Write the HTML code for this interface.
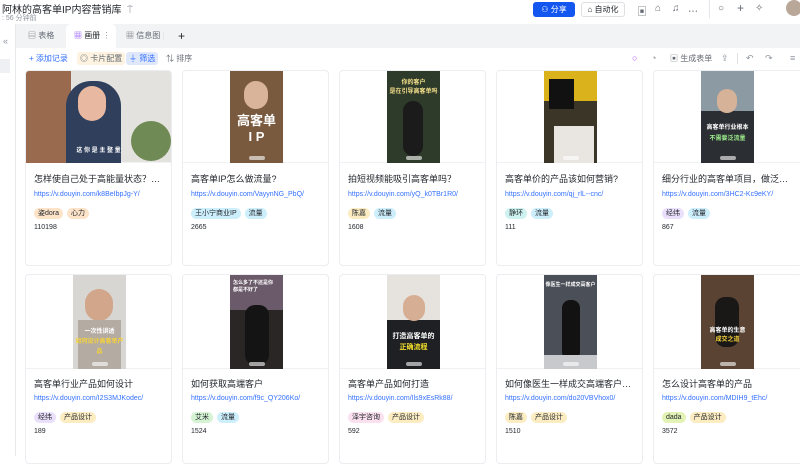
<!DOCTYPE html>
<html><head><meta charset="utf-8">
<style>
*{margin:0;padding:0;box-sizing:border-box}
body{width:800px;height:456px;overflow:hidden;background:#fff;font-family:"Liberation Sans","Noto Sans CJK SC",sans-serif;color:#1f2329;position:relative}
.a{position:absolute}
.title{left:2px;top:1px;font-size:10px;color:#1f2329}
.sub{left:2px;top:13px;font-size:7px;color:#8f959e}
.tabs{left:16px;top:24px;width:784px;height:24px;background:#f2f3f5}
.tab{position:absolute;top:0;height:24px;line-height:24px;font-size:8px;color:#646a73}
.tab.on{background:#fff;border-radius:5px 5px 0 0;color:#1f2329}
.side{left:0;top:24px;width:16px;height:432px;border-right:1px solid #e8e9eb}
.tb{top:52px;font-size:8px;color:#646a73;height:13px;line-height:13px;padding:0 3px;border-radius:3px}
.ic{top:3px;font-size:10px;color:#646a73}
.ti{top:52px;font-size:9px;color:#8f959e;line-height:13px}
.card{position:absolute;width:147px;background:#fff;border:1px solid #ebedf0;border-radius:4px;overflow:hidden}
.img{position:absolute;top:0;height:92px;left:0;right:0;border-bottom:1px solid #f0f1f3}
.th{position:absolute;top:0;left:47px;width:53px;height:92px}
.ct{position:absolute;left:8px;font-size:9px;color:#1f2329;white-space:nowrap;width:133px;overflow:hidden;text-overflow:ellipsis}
.lk{position:absolute;left:8px;font-size:7px;color:#3370ff;white-space:nowrap}
.tg{position:absolute;left:8px;font-size:7px;white-space:nowrap}
.tg span{display:inline-block;padding:0 4px;height:11px;line-height:11px;border-radius:6px;margin-right:4px;color:#1f2329}
.nm{position:absolute;left:8px;font-size:7px;color:#1f2329}
.o{background:#fde3c8}.b{background:#cdeefb}.p{background:#ebe0fb}.g{background:#d5f2d3}.y{background:#fbecc1}.pk{background:#fbe0ef}.c{background:#cdf2ef}.l{background:#e3f2b5}
.cap{position:absolute;left:0;right:0;text-align:center;font-weight:bold;color:#fff;font-size:8px}
.dots{position:absolute;bottom:3px;left:50%;margin-left:-8px;width:16px;height:4px;border-radius:2px;background:rgba(255,255,255,.6)}
</style></head><body>
<div class="a title">阿林的高客单IP内容营销库 &nbsp;<span style="color:#8f959e">⍑</span></div>
<div class="a sub">: 56 分钟前</div>
<div class="a" style="left:533px;top:2px;width:42px;height:15px;background:#1456f0;border-radius:3px;color:#fff;font-size:8px;line-height:15px;text-align:center">⚇ 分享</div>
<div class="a" style="left:581px;top:2px;width:44px;height:15px;border:1px solid #dee0e3;border-radius:3px;font-size:8px;line-height:13px;text-align:center">⌂ 自动化</div>
<div class="a ic" style="left:637px">▣</div>
<div class="a ic" style="left:655px">⌂</div>
<div class="a ic" style="left:672px">♫</div>
<div class="a ic" style="left:688px">⋯</div>
<div class="a" style="left:709px;top:0;width:1px;height:18px;background:#e5e6eb"></div>
<div class="a ic" style="left:718px">○</div>
<div class="a ic" style="left:737px;font-size:12px;top:1px">+</div>
<div class="a ic" style="left:755px">✧</div>
<div class="a" style="left:786px;top:0;width:16px;height:16px;border-radius:8px;background:#b9a89a"></div>
<div class="a side"><div style="position:absolute;top:12px;left:3px;font-size:9px;color:#8f959e">«</div><div style="position:absolute;top:35px;left:0;width:10px;height:14px;background:#eef0f3"></div></div>
<div class="a tabs">
 <div class="tab" style="left:0;width:50px;padding-left:12px">▤ 表格</div>
 <div class="tab on" style="left:50px;width:50px;padding-left:8px"><span style="color:#7f3bf5">▦</span> 画册 <span style="color:#8f959e">⋮</span></div>
 <div class="tab" style="left:110px;width:60px;padding-left:0">▦ 信息图 <span style="color:#dee0e3">|</span></div>
 <div class="tab" style="left:162px;font-size:12px;color:#1f2329">+</div>
</div>
<div class="a tb" style="left:26px;color:#3370ff">+ 添加记录</div>
<div class="a tb" style="left:77px;background:#fdf3e0">◎ 卡片配置</div>
<div class="a tb" style="left:126px;background:#dfe7fb;color:#3370ff">⏚ 筛选</div>
<div class="a tb" style="left:163px">⇅ 排序</div>
<div class="a ti" style="left:632px;color:#b04bf5">○</div>
<div class="a ti" style="left:651px">◔</div>
<div class="a ti" style="left:670px;font-size:8px;color:#646a73">▣ 生成表单</div>
<div class="a ti" style="left:721px">⇪</div>
<div class="a" style="left:737px;top:53px;width:1px;height:11px;background:#dee0e3"></div>
<div class="a ti" style="left:746px">↶</div>
<div class="a ti" style="left:765px">↷</div>
<div class="a ti" style="left:790px">≡</div>

<!-- row 1 -->
<div class="card" style="left:25px;top:70px;height:196px">
 <div class="img" style="background:#e4e2df"><div style="position:absolute;left:0;top:0;width:45px;height:92px;background:#9a6a4e"></div><div style="position:absolute;left:40px;top:10px;width:55px;height:82px;border-radius:25px 25px 0 0;background:#2f3f5c"></div><div style="position:absolute;left:52px;top:15px;width:28px;height:35px;border-radius:14px;background:#e8b9a0"></div><div style="position:absolute;right:0;top:50px;width:40px;height:40px;background:#6f8a55;border-radius:20px"></div><div class="cap" style="bottom:8px;font-size:6px">这 你 是 主 整 量</div></div>
 <div class="ct" style="top:101px">怎样使自己处于高能量状态？一些方法</div>
 <div class="lk" style="top:120px">https://v.douyin.com/k8BeIbpJg-Y/</div>
 <div class="tg" style="top:137px"><span class="o">姿dora</span><span class="o">心力</span></div>
 <div class="nm" style="top:153px">110198</div>
</div>
<div class="card" style="left:182px;top:70px;height:196px">
 <div class="img"><div class="th" style="background:#7a5a3e"><div style="position:absolute;left:14px;top:10px;width:24px;height:28px;border-radius:12px;background:#d9b49b"></div><div class="cap" style="top:42px;font-size:13px;line-height:16px">高客单<br>I P</div><div class="dots"></div></div></div>
 <div class="ct" style="top:101px">高客单IP怎么做流量?</div>
 <div class="lk" style="top:120px">https://v.douyin.com/VayynNG_PbQ/</div>
 <div class="tg" style="top:137px"><span class="b">王小宁商业IP</span><span class="b">流量</span></div>
 <div class="nm" style="top:153px">2665</div>
</div>
<div class="card" style="left:339px;top:70px;height:196px">
 <div class="img"><div class="th" style="background:#2e3a2a"><div class="cap" style="top:6px;font-size:6px;color:#f5e08a">你的客户<br>是在引导高客单吗</div><div style="position:absolute;left:16px;top:30px;width:20px;height:55px;border-radius:10px;background:#1b1b1b"></div><div class="dots"></div></div></div>
 <div class="ct" style="top:101px">拍短视频能吸引高客单吗？</div>
 <div class="lk" style="top:120px">https://v.douyin.com/yQ_k0TBr1R0/</div>
 <div class="tg" style="top:137px"><span class="y">陈嘉</span><span class="b">流量</span></div>
 <div class="nm" style="top:153px">1608</div>
</div>
<div class="card" style="left:496px;top:70px;height:196px">
 <div class="img"><div class="th" style="background:#3a3526"><div style="position:absolute;left:0;top:0;width:53px;height:30px;background:#d9b21c"></div><div style="position:absolute;left:5px;top:8px;width:25px;height:30px;background:#111"></div><div style="position:absolute;left:10px;top:55px;width:40px;height:37px;background:#e9e6e2"></div><div class="dots"></div></div></div>
 <div class="ct" style="top:101px">高客单价的产品该如何营销?</div>
 <div class="lk" style="top:120px">https://v.douyin.com/qj_rlL--cnc/</div>
 <div class="tg" style="top:137px"><span class="c">静环</span><span class="b">流量</span></div>
 <div class="nm" style="top:153px">111</div>
</div>
<div class="card" style="left:653px;top:70px;height:196px;width:150px">
 <div class="img"><div class="th" style="background:#8c9aa3"><div style="position:absolute;left:0;top:40px;width:53px;height:52px;background:#2b2e33"></div><div style="position:absolute;left:16px;top:18px;width:20px;height:24px;border-radius:10px;background:#d6b298"></div><div class="cap" style="top:52px;font-size:6px;line-height:11px">高客单行业根本<br><span style="color:#9ef08c">不需要泛流量</span></div><div class="dots"></div></div></div>
 <div class="ct" style="top:101px">细分行业的高客单项目，做泛流量有用吗</div>
 <div class="lk" style="top:120px">https://v.douyin.com/3HC2-Kc9eKY/</div>
 <div class="tg" style="top:137px"><span class="p">经纬</span><span class="b">流量</span></div>
 <div class="nm" style="top:153px">867</div>
</div>

<!-- row 2 -->
<div class="card" style="left:25px;top:274px;height:190px">
 <div class="img" style="height:94px"><div class="th" style="background:#d8d6d3;height:94px"><div style="position:absolute;left:12px;top:14px;width:28px;height:32px;border-radius:14px;background:#d2a68a"></div><div style="position:absolute;left:5px;top:45px;width:43px;height:49px;background:#b4aba3"></div><div class="cap" style="top:52px;font-size:6px;line-height:10px">一次性讲透<br><span style="color:#f5d23a">如何设计高客单产品</span></div><div class="dots"></div></div></div>
 <div class="ct" style="top:102px">高客单行业产品如何设计</div>
 <div class="lk" style="top:120px">https://v.douyin.com/I2S3MJKodec/</div>
 <div class="tg" style="top:137px"><span class="p">经纬</span><span class="y">产品设计</span></div>
 <div class="nm" style="top:153px">189</div>
</div>
<div class="card" style="left:182px;top:274px;height:190px">
 <div class="img" style="height:94px"><div class="th" style="background:#2a2626;height:94px"><div style="position:absolute;left:0;top:0;width:53px;height:35px;background:#6b5a6a"></div><div class="cap" style="top:4px;font-size:5px;text-align:left;padding-left:3px">怎么多了不还是你<br>都是不好了</div><div style="position:absolute;left:15px;top:30px;width:24px;height:60px;border-radius:10px;background:#151414"></div><div class="dots"></div></div></div>
 <div class="ct" style="top:102px">如何获取高端客户</div>
 <div class="lk" style="top:120px">https://v.douyin.com/f9c_QY206Ko/</div>
 <div class="tg" style="top:137px"><span class="g">艾米</span><span class="b">流量</span></div>
 <div class="nm" style="top:153px">1524</div>
</div>
<div class="card" style="left:339px;top:274px;height:190px">
 <div class="img" style="height:94px"><div class="th" style="background:#e6e3df;height:94px"><div style="position:absolute;left:0;top:45px;width:53px;height:49px;background:#1e2024"></div><div style="position:absolute;left:16px;top:20px;width:22px;height:26px;border-radius:11px;background:#d6ae93"></div><div class="cap" style="top:56px;font-size:7px;line-height:11px">打造高客单的<br><span style="color:#f5e12a">正确流程</span></div><div class="dots"></div></div></div>
 <div class="ct" style="top:102px">高客单产品如何打造</div>
 <div class="lk" style="top:120px">https://v.douyin.com/Ils9xEsRk88/</div>
 <div class="tg" style="top:137px"><span class="pk">泽宇咨询</span><span class="y">产品设计</span></div>
 <div class="nm" style="top:153px">592</div>
</div>
<div class="card" style="left:496px;top:274px;height:190px">
 <div class="img" style="height:94px"><div class="th" style="background:#4a4f58;height:94px"><div class="cap" style="top:6px;font-size:5px">像医生一样成交高客户</div><div style="position:absolute;left:18px;top:25px;width:18px;height:60px;border-radius:8px;background:#121212"></div><div style="position:absolute;left:0;top:80px;width:53px;height:14px;background:#c7c9cc"></div><div class="dots"></div></div></div>
 <div class="ct" style="top:102px">如何像医生一样成交高端客户，这样做</div>
 <div class="lk" style="top:120px">https://v.douyin.com/do20VBVhox0/</div>
 <div class="tg" style="top:137px"><span class="y">陈嘉</span><span class="y">产品设计</span></div>
 <div class="nm" style="top:153px">1510</div>
</div>
<div class="card" style="left:653px;top:274px;height:190px;width:150px">
 <div class="img" style="height:94px"><div class="th" style="background:#5a4332;height:94px"><div style="position:absolute;left:14px;top:22px;width:24px;height:50px;border-radius:10px;background:#1a1717"></div><div class="cap" style="top:52px;font-size:6px;line-height:9px">高客单的生意<br><span style="color:#f5d23a">成交之道</span></div><div class="dots"></div></div></div>
 <div class="ct" style="top:102px">怎么设计高客单的产品</div>
 <div class="lk" style="top:120px">https://v.douyin.com/MDIH9_tEhc/</div>
 <div class="tg" style="top:137px"><span class="l">dada</span><span class="y">产品设计</span></div>
 <div class="nm" style="top:153px">3572</div>
</div>
</body></html>
